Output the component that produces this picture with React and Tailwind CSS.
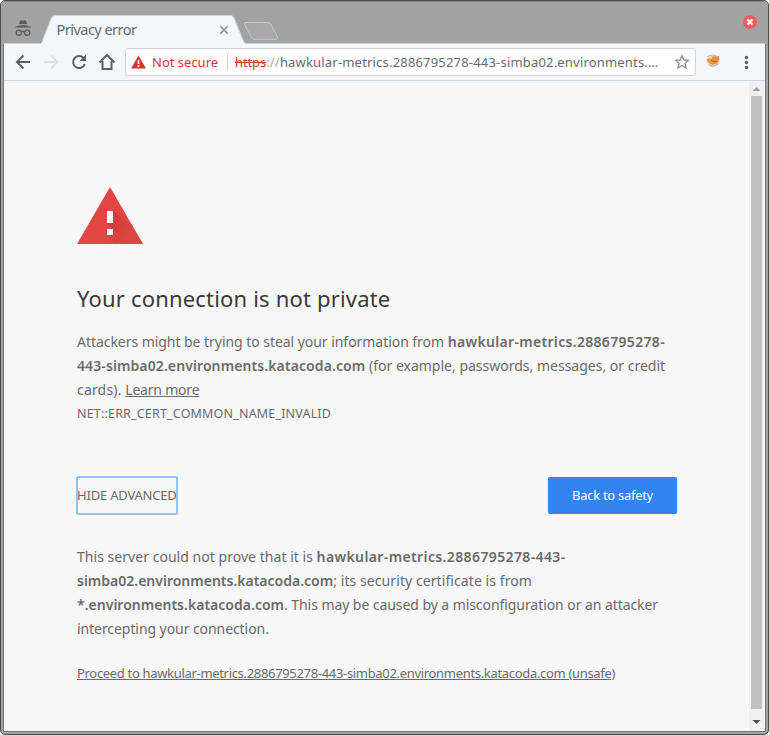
function Line({ className = "", children }) {
  return <div className={"h-6 w-max whitespace-nowrap text-[14px] leading-6 " + className}>{children}</div>;
}

function TitleBar() {
  return (
    <header className="h-[43px] shrink-0">
      <svg width="767" height="43" viewBox="1 1 767 43" className="block">
        <path d="M1 5Q1 1 5 1H764Q768 1 768 5V44H1Z" fill="#a2a2a2" />
        <path d="M4 1.500H765" stroke="#858585" />
        <path d="M4 43.500H40.500C42 43 42.500 41 43 39L51.500 18Q52.500 15.500 55 15.500H231Q233 15.500 234 18L242.500 39Q244 43.500 246.500 43.500H765V45H4Z" fill="#f4f6f9" stroke="#cbd2e5" />
        <path d="M42 44H245" stroke="#f4f6f9" strokeWidth="2" />
        <path d="M246 22.500H268Q270 22.500 271 24.500L277.500 37Q278.500 39.300 276 39.300H254Q252 39.300 251 37L244.500 24.500Q244 22.500 246 22.500Z" fill="#a9a9a9" stroke="#c4c9d9" />
        <g fill="#5c5c5c">
          <path d="M19 24L20 20.500Q21 19.700 23 20.700Q25 19.700 26 20.500L27 24Z" />
          <path d="M15 27Q19 25 23 25Q27 25 31 27V27.500H15Z" />
        </g>
        <g fill="none" stroke="#5c5c5c" strokeWidth="1.300">
          <circle cx="18.800" cy="32.700" r="2.600" />
          <circle cx="27.200" cy="32.700" r="2.600" />
          <path d="M21.500 32Q23 31 24.500 32" />
        </g>
        <text x="56.500" y="35" fontSize="14.500" fill="#646a74" className="font-['Noto_Sans',sans-serif]" textLength="80.500">Privacy error</text>
        <path d="M220.300 26.300L227.700 33.700M227.700 26.300L220.300 33.700" stroke="#8b8e94" strokeWidth="1.600" />
        <circle cx="750" cy="22" r="7" fill="#fc5b63" />
        <path d="M747.500 19.500L752.500 24.500M752.500 19.500L747.500 24.500" stroke="#fff" strokeWidth="2" />
      </svg>
    </header>
  );
}

function Toolbar() {
  return (
    <div className="flex h-[37px] shrink-0 items-center border-b border-[#cdd5e7] bg-[#f4f6f9]">
      <svg width="121" height="36" viewBox="4 44 121 36" fill="none" strokeWidth="2" className="shrink-0">
        <path d="M30 62H17.500M23.500 55.500L17 62L23.500 68.500" stroke="#596069" />
        <path d="M44 62H57M51 55.500L57.500 62L51 68.500" stroke="#dcdde0" />
        <path d="M83.500 58A6 6 0 1 0 84.800 64" stroke="#596069" />
        <path d="M86 54.500V61H79.500Z" fill="#596069" />
        <path d="M99.500 62.500L107 55L114.500 62.500M102.500 61V69H111.500V61" stroke="#596069" />
      </svg>
      <div className="flex h-7 w-[571px] shrink-0 items-center rounded-[3px] border border-[#cdd3e5] bg-white text-[13px]">
        <svg width="15" height="14" viewBox="0 0 15 14" className="ml-[5px]">
          <path d="M7.500 .500L15 13.500H0Z" fill="#d23a30" />
          <path d="M7.500 5V9M7.500 10V12" stroke="#fff" strokeWidth="1.600" />
        </svg>
        <span className="ml-[6px] w-[66px] whitespace-nowrap pt-px text-[#cc3b32]">Not secure</span>
        <span className="ml-[9px] h-4 w-px bg-[#d0d0d0]" />
        <span className="ml-[7px] w-[425px] whitespace-nowrap pt-px tracking-[0.187px] text-[#646a73]">
          <span className="tracking-[-0.1px] text-[#cc3b32] line-through">https</span>
          <span className="text-[#a2a5aa]">://</span>hawkular-metrics.2886795278-443-simba02.environments.…
        </span>
        <svg width="16" height="16" viewBox="0 0 16 16" className="ml-[14px]" fill="none" stroke="#8f939d" strokeWidth="1.400">
          <path d="M8 1.800L9.900 6L14.300 6.400L11 9.400L12 13.900L8 11.500L4 13.900L5 9.400L1.700 6.400L6.100 6Z" />
        </svg>
      </div>
      <svg width="69" height="36" viewBox="696 44 69 36" className="shrink-0">
        <ellipse cx="713" cy="61" rx="6.500" ry="5.500" fill="#e6d7c5" />
        <path d="M706.500 60L709 58L711 59L713 56L717 57L719 55.500L719.500 59L717 64L712 65L709 63Z" fill="#ed9340" />
        <path d="M707 57Q712 53 718 57M709 65Q713 68 718 64" fill="none" stroke="#b6ada3" />
        <path d="M711 60L714 62L717 61" fill="none" stroke="#b65d22" />
        <g fill="#596069"><circle cx="746.500" cy="57.500" r="1.700" /><circle cx="746.500" cy="62.500" r="1.700" /><circle cx="746.500" cy="67.500" r="1.700" /></g>
      </svg>
    </div>
  );
}

function Scrollbar() {
  return (
    <div className="mr-px flex w-[15px] shrink-0 flex-col items-center bg-[#f0f0f0]">
      <svg width="15" height="15" viewBox="0 0 15 15"><path d="M3.500 10L7.500 6L11.500 10Z" fill="#a0a0a0" /></svg>
      <div className="w-[11px] flex-1 bg-[#c1c1c1]" />
      <svg width="15" height="22" viewBox="0 0 15 22"><path d="M3.500 11L7.500 15L11.500 11Z" fill="#505050" /></svg>
    </div>
  );
}

export default function App() {
  return (
    <div className="flex h-[735px] w-[769px] flex-col overflow-hidden rounded-[5px] border border-[#4d4d4d] bg-[#a2a2a2] font-['Noto_Sans',sans-serif]">
      <TitleBar />
      <div className="mx-[2px] mb-[2px] flex min-h-0 flex-1 flex-col border border-t-0 border-[#747674] bg-[#f7f7f7]">
        <Toolbar />
        <div className="flex min-h-0 flex-1">
          <main className="flex flex-1 flex-col pl-[73px] pt-[106px] text-[#6a6a6a]">
            <svg width="66" height="57" viewBox="0 0 66 57">
              <defs>
                <linearGradient id="shade" x1="0" y1="0" x2="1" y2="1">
                  <stop offset="0" stopColor="#c93c37" />
                  <stop offset="0.700" stopColor="#dd4540" />
                </linearGradient>
              </defs>
              <path d="M33 0L66 57H0Z" fill="#e24641" />
              <path d="M36 24L54 37L66 57H38L30 48L36 42L30 36Z" fill="url(#shade)" />
              <path d="M30 24H36V36H30ZM30 42H36V48H30Z" fill="#fff" />
            </svg>
            <h1 className="mt-[38px] h-8 whitespace-nowrap text-[22px] leading-8 tracking-[0.18px] text-[#3a3a3a]">Your connection is not private</h1>
            <Line className="mt-4"><span className="tracking-[-0.046px]">Attackers might be trying to steal your information from</span> <b className="font-semibold tracking-[0.32px]">hawkular-metrics.2886795278-</b></Line>
            <Line><b className="font-semibold tracking-[0.1px]">443-simba02.environments.katacoda.com</b> <span>(for example, passwords, messages, or credit</span></Line>
            <Line><span className="tracking-[0.18px]">cards).</span> <span className="tracking-[-0.2px] underline">Learn more</span></Line>
            <Line className="-mt-px"><span className="text-[12.5px] tracking-[0.18px]">NET::ERR_CERT_COMMON_NAME_INVALID</span></Line>
            <div className="mt-[52px] flex h-[37px] w-[600px] items-center justify-between">
              <button className="h-[37px] w-[100px] whitespace-nowrap rounded-[1px] text-left text-[13px] tracking-[-0.2px] outline-2 -outline-offset-1 outline-[#94c2ee]">HIDE ADVANCED</button>
              <button className="h-[37px] w-[129px] whitespace-nowrap rounded-[2px] bg-[#3284f0] text-[13px] tracking-[-0.28px] text-white">Back to safety</button>
            </div>
            <Line className="mt-[31px]"><span className="tracking-[0.037px]">This server could not prove that it is</span> <b className="font-semibold tracking-[0.38px]">hawkular-metrics.2886795278-443-</b></Line>
            <Line><b className="font-semibold">simba02.environments.katacoda.com</b><span className="tracking-[0.08px]">; its security certificate is from</span></Line>
            <Line><b className="font-semibold tracking-[0.02px]">*.environments.katacoda.com</b><span className="tracking-[-0.067px]">. This may be caused by a misconfiguration or an attacker</span></Line>
            <Line className="tracking-[-0.07px]">intercepting your connection.</Line>
            <Line className="mt-5"><span className="text-[13px] tracking-[-0.32px] underline">Proceed to hawkular-metrics.2886795278-443-simba02.environments.katacoda.com (unsafe)</span></Line>
          </main>
          <Scrollbar />
        </div>
      </div>
    </div>
  );
}
